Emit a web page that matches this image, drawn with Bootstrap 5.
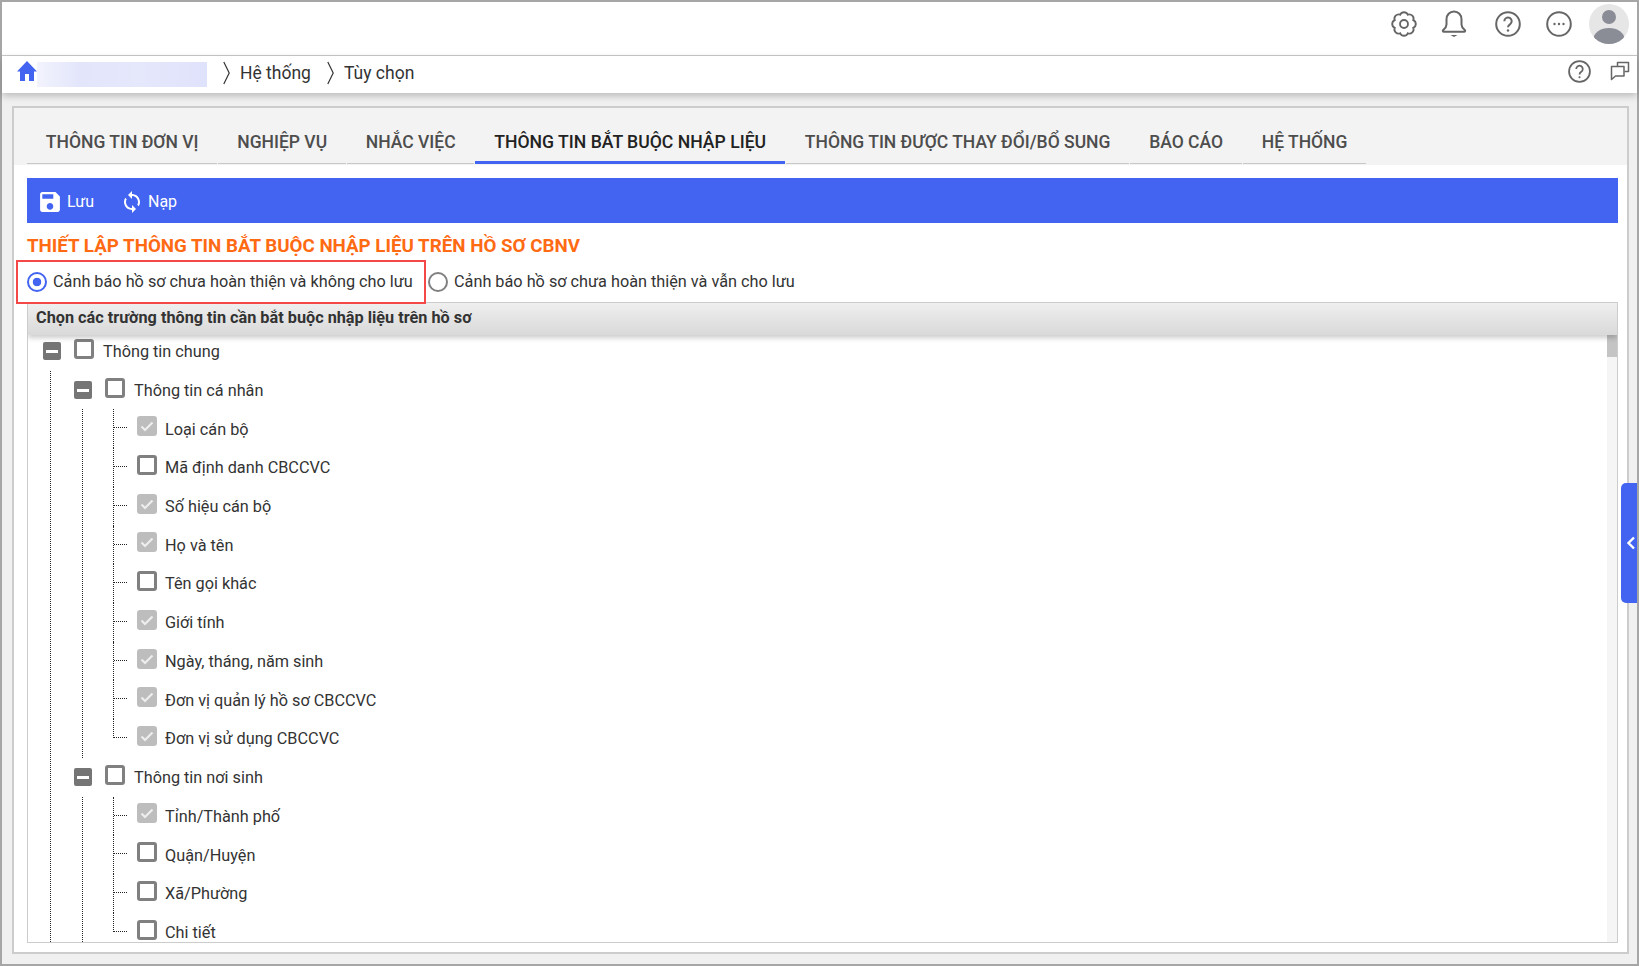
<!DOCTYPE html>
<html lang="vi">
<head>
<meta charset="utf-8">
<title>Tùy chọn</title>
<link href="https://cdn.jsdelivr.net/npm/bootstrap@5.3.0/dist/css/bootstrap.min.css" rel="stylesheet">
<style>
html,body{margin:0;height:966px;overflow:hidden}
body{font-family:Roboto,"Liberation Sans",sans-serif;color:#333;background:#f0f0f0}
.app-frame{position:relative;height:966px;border:2px solid #a6a6a6;background:#f0f0f0}
.top-head{height:54px;background:#fff;border-bottom:1px solid #c9c9c9;padding:0 8px 9px 0}
.top-head svg{display:block}
.head-ico{color:#666}
.gear-ico{margin-right:22px}
.bell-ico{margin-right:27px}
.help-ico{margin-right:25px}
.dots-ico{margin-right:17px}
.crumb-bar{height:37px;background:#fff;box-shadow:0 3px 7px rgba(0,0,0,.22);position:relative;padding:0 0 2px 15px;font-size:17.5px;line-height:1;color:#333}
.crumb-blur{width:170px;height:25px;margin-top:6px;background:linear-gradient(90deg,#f2f3fd,#e3e6fb 25%,#e5e8fb 60%,#dfe2fb)}
.crumb-chev{margin:-2px 10px 0 16px}
.crumb-tools{margin:-5px 7px 0 auto}
.crumb-help{margin-right:19px}
.home-ico{margin-top:-6px}
.main-card{margin:13px 8px 10px 10px;height:848px;border:2px solid #ccc;background:#fff}
.tab-strip{height:57px;background:#f3f3f3;padding:0 0 1px 13px;margin:0;list-style:none;gap:1px;flex-wrap:nowrap}
.tab-link{display:block;height:56px;padding:22px 18.85px 0;border-bottom:1px solid #c8c8c8;font-size:17.5px;line-height:24px;font-weight:500;color:#4d4d4d;text-decoration:none;white-space:nowrap}
.tab-link.on{color:#222;font-size:17.63px;border-bottom:3px solid #4364f0}
.tool-bar{height:45px;margin:13px 9px 0 13px;background:#4364f0;color:#fff;padding-left:12px}
.tool-btn{color:#fff;padding:3px 0 0;border:0;font-size:16px;display:flex;align-items:center;gap:6px}
.tool-btn:hover{color:#fff}
.save-btn{margin-right:26px}
.sync-btn{gap:4px}
.set-title{height:37px;margin:0 0 0 13px;line-height:47px;font-size:18.75px;font-weight:700;color:#ff6a13;white-space:nowrap}
.radio-row{height:44px;margin-left:2px;font-size:16.25px;position:relative;z-index:2}
.radio-mark{border:2px solid #f44848;height:44px;width:410px;padding-left:9px;margin-right:2px;white-space:nowrap}
.form-check-input.pick{width:20px;height:20px;margin:0 6px 0 0;flex:none;border:2px solid #808080;box-shadow:none;background:#fff}
.form-check-input.pick:checked{border-color:#4364f0;background:radial-gradient(circle,#4364f0 0 4px,#fff 4.6px)}
.tree-panel{margin:-2px 9px 0 13px;height:641px;border:1px solid #ccc;overflow:hidden;position:relative}
.panel-head{height:32px;background:linear-gradient(#efefef,#d9d9d9);font-size:16.25px;font-weight:700;line-height:30px;padding-left:8px;color:#333;position:relative;z-index:1;box-shadow:0 3px 5px rgba(0,0,0,.2)}
.tree-zone{height:607px}
.tree-flow{margin-top:-3px;overflow:hidden;height:610px}
.side-scroll{width:10px;background:#f5f5f5}
.side-thumb{height:22px;background:#c4c4c4}
.node{height:38.73px;padding-top:2px;font-size:16.25px;white-space:nowrap;color:#333}
.node-root{padding-left:15px}
.node-mid{padding-left:23px}
.fold{width:18px;height:18px;background:#757575;border-radius:2px;margin:0 13px 2px 0;display:flex;align-items:center;justify-content:center;flex:none}
.fold::after{content:"";width:12px;height:3px;background:#fff}
.form-check-input.tick-box{width:20px;height:20px;margin:0 9px 7px 0;flex:none;border:3px solid #808080;border-radius:3px;box-shadow:none;background:#fff}
.form-check-input.tick-box.locked{border-color:#bdbdbd;background-color:#bdbdbd;background-image:url("data:image/svg+xml,%3csvg xmlns='http://www.w3.org/2000/svg' viewBox='0 0 14 14'%3e%3cpath fill='none' stroke='%23eee' stroke-width='2.2' d='M1.5 7.500l3.500 3.500 7.500-7.500'/%3e%3c/svg%3e");background-size:14px;background-position:center;background-repeat:no-repeat}
.rail-one{margin-left:22px;border-left:1px dotted #222}
.rail-two{margin-left:31px;border-left:1px dotted #222}
.leaf-list{margin-left:30px}
.leaf-list .form-check-input.tick-box{margin-right:8px}
.elbow{width:14px;margin:-2px 10px 0 0;align-self:stretch;border-left:1px dotted #222;flex:none}
.elbow::after{content:"";display:block;height:19px;border-bottom:1px dotted #222}
.elbow.end{align-self:flex-start;height:19px}
.side-toggle{position:absolute;right:0;top:481px;width:16px;height:120px;padding-left:3px;background:#4364f0;border-radius:5px 0 0 5px}
</style>
</head>
<body>
<div class="app-frame d-flex flex-column">
  <header class="top-head d-flex align-items-center justify-content-end flex-shrink-0">
    <svg class="head-ico gear-ico" width="28" height="28" viewBox="0 0 24 24" fill="none" stroke="currentColor" stroke-width="1.6"><path d="M19.95 8.71A3.6 3.6 0 0 1 19.95 15.29A3.6 3.6 0 0 1 15.29 19.95A3.6 3.6 0 0 1 8.71 19.95A3.6 3.6 0 0 1 4.05 15.29A3.6 3.6 0 0 1 4.05 8.71A3.6 3.6 0 0 1 8.71 4.05A3.6 3.6 0 0 1 15.29 4.05A3.6 3.6 0 0 1 19.95 8.71Z"/><circle cx="12" cy="12" r="3.4"/></svg>
    <svg class="head-ico bell-ico" width="28" height="30" viewBox="0 0 28 30" fill="none" stroke="currentColor" stroke-width="2"><path d="M14 2.500c-4.400 0-7.500 3.500-7.500 7.800v5.200c0 2.800-1.500 4-3.300 5.500-.8.700-.3 1.800.7 1.800h20.200c1 0 1.500-1.100.7-1.800-1.800-1.500-3.300-2.700-3.300-5.500v-5.200c0-4.300-3.100-7.800-7.500-7.800z" stroke-linejoin="round"/><path d="M10.500 26h7l-3.500 2z" fill="currentColor" stroke="none"/></svg>
    <svg class="head-ico help-ico" width="26" height="26" viewBox="0 0 26 26" fill="none" stroke="currentColor" stroke-width="2"><circle cx="13" cy="13" r="11.800"/><path d="M9.300 10.200a3.700 3.700 0 1 1 5.700 3.100c-1.300.8-2 1.500-2 3"/><circle cx="13" cy="19.500" r="1.200" fill="currentColor" stroke="none"/></svg>
    <svg class="head-ico dots-ico" width="26" height="26" viewBox="0 0 26 26" fill="none" stroke="currentColor" stroke-width="2"><circle cx="13" cy="13" r="11.800"/><g fill="currentColor" stroke="none"><circle cx="8.500" cy="13" r="1.200"/><circle cx="13" cy="13" r="1.200"/><circle cx="17.500" cy="13" r="1.200"/></g></svg>
    <svg width="40" height="40" viewBox="0 0 40 40"><defs><clipPath id="avatarClip"><circle cx="20" cy="20" r="20"/></clipPath></defs><circle cx="20" cy="20" r="20" fill="#e6e6e6"/><g clip-path="url(#avatarClip)" fill="#8a8c96"><circle cx="20" cy="13" r="7"/><ellipse cx="20" cy="35" rx="15.500" ry="11"/></g></svg>
  </header>
  <nav class="crumb-bar d-flex align-items-center flex-shrink-0">
    <svg class="home-ico" width="20" height="20" viewBox="2 3 20 17" fill="#4364f0" preserveAspectRatio="none"><path d="M10 20v-6h4v6h5v-8h3L12 3 2 12h3v8z"/></svg>
    <div class="crumb-blur align-self-start"></div>
    <svg class="crumb-chev" width="7" height="24" viewBox="0 0 7 24" fill="none" stroke="#333" stroke-width="1.200"><path d="M.8 1l5.400 11-5.400 11"/></svg>
    <span>Hệ thống</span>
    <svg class="crumb-chev" width="7" height="24" viewBox="0 0 7 24" fill="none" stroke="#333" stroke-width="1.200"><path d="M.8 1l5.400 11-5.400 11"/></svg>
    <span>Tùy chọn</span>
    <div class="crumb-tools d-flex align-items-center head-ico">
      <svg class="crumb-help" width="23" height="23" viewBox="0 0 26 26" fill="none" stroke="currentColor" stroke-width="2"><circle cx="13" cy="13" r="11.800"/><path d="M9.300 10.200a3.700 3.700 0 1 1 5.700 3.100c-1.300.8-2 1.500-2 3"/><circle cx="13" cy="19.500" r="1.200" fill="currentColor" stroke="none"/></svg>
      <svg width="20" height="20" viewBox="0 0 20 20" fill="none" stroke="currentColor" stroke-width="1.500" stroke-linejoin="round"><path d="M7.500 5.500V1.500h11v9h-4"/><path d="M1.500 5.500h12.500v9.500H5.500L1.500 18.500z"/></svg>
    </div>
  </nav>
  <main class="main-card flex-shrink-0">
    <ul class="nav tab-strip">
      <li class="nav-item"><a class="tab-link" href="#">THÔNG TIN ĐƠN VỊ</a></li>
      <li class="nav-item"><a class="tab-link" href="#">NGHIỆP VỤ</a></li>
      <li class="nav-item"><a class="tab-link" href="#">NHẮC VIỆC</a></li>
      <li class="nav-item"><a class="tab-link on" href="#">THÔNG TIN BẮT BUỘC NHẬP LIỆU</a></li>
      <li class="nav-item"><a class="tab-link" href="#">THÔNG TIN ĐƯỢC THAY ĐỔI/BỔ SUNG</a></li>
      <li class="nav-item"><a class="tab-link" href="#">BÁO CÁO</a></li>
      <li class="nav-item"><a class="tab-link" href="#">HỆ THỐNG</a></li>
    </ul>
    <div class="tool-bar d-flex align-items-center">
      <button type="button" class="btn tool-btn save-btn"><svg width="22" height="22" viewBox="2 2 20 20" fill="#fff"><path d="M17 3H5c-1.110 0-2 .9-2 2v14c0 1.100.89 2 2 2h14c1.100 0 2-.9 2-2V7l-4-4zm-5 16c-1.660 0-3-1.340-3-3s1.340-3 3-3 3 1.340 3 3-1.340 3-3 3zm3-10H5V5h10v4z"/></svg>Lưu</button>
      <button type="button" class="btn tool-btn sync-btn"><svg width="24" height="24" viewBox="0 0 24 24" fill="#fff"><path d="M12 4V1L8 5l4 4V6c3.310 0 6 2.690 6 6 0 1.010-.25 1.970-.7 2.800l1.460 1.460C19.540 15.030 20 13.570 20 12c0-4.420-3.580-8-8-8zm0 14c-3.310 0-6-2.690-6-6 0-1.010.25-1.970.7-2.800L5.240 7.740C4.460 8.970 4 10.430 4 12c0 4.420 3.580 8 8 8v3l4-4-4-4v3z"/></svg>Nạp</button>
    </div>
    <h2 class="set-title">THIẾT LẬP THÔNG TIN BẮT BUỘC NHẬP LIỆU TRÊN HỒ SƠ CBNV</h2>
    <div class="radio-row d-flex align-items-center">
      <label class="radio-mark d-flex align-items-center"><input class="form-check-input pick" type="radio" name="warnMode" checked>Cảnh báo hồ sơ chưa hoàn thiện và không cho lưu</label>
      <label class="d-flex align-items-center"><input class="form-check-input pick" type="radio" name="warnMode">Cảnh báo hồ sơ chưa hoàn thiện và vẫn cho lưu</label>
    </div>
    <section class="tree-panel">
      <div class="panel-head">Chọn các trường thông tin cần bắt buộc nhập liệu trên hồ sơ</div>
      <div class="tree-zone d-flex">
        <div class="tree-flow flex-grow-1">
          <div class="node node-root d-flex align-items-center"><span class="fold"></span><input class="form-check-input tick-box" type="checkbox">Thông tin chung</div>
          <div class="rail-one">
            <div class="node node-mid d-flex align-items-center"><span class="fold"></span><input class="form-check-input tick-box" type="checkbox">Thông tin cá nhân</div>
            <div class="rail-two"><div class="leaf-list">
              <div class="node d-flex align-items-center"><span class="elbow"></span><input class="form-check-input tick-box locked" type="checkbox">Loại cán bộ</div>
              <div class="node d-flex align-items-center"><span class="elbow"></span><input class="form-check-input tick-box" type="checkbox">Mã định danh CBCCVC</div>
              <div class="node d-flex align-items-center"><span class="elbow"></span><input class="form-check-input tick-box locked" type="checkbox">Số hiệu cán bộ</div>
              <div class="node d-flex align-items-center"><span class="elbow"></span><input class="form-check-input tick-box locked" type="checkbox">Họ và tên</div>
              <div class="node d-flex align-items-center"><span class="elbow"></span><input class="form-check-input tick-box" type="checkbox">Tên gọi khác</div>
              <div class="node d-flex align-items-center"><span class="elbow"></span><input class="form-check-input tick-box locked" type="checkbox">Giới tính</div>
              <div class="node d-flex align-items-center"><span class="elbow"></span><input class="form-check-input tick-box locked" type="checkbox">Ngày, tháng, năm sinh</div>
              <div class="node d-flex align-items-center"><span class="elbow"></span><input class="form-check-input tick-box locked" type="checkbox">Đơn vị quản lý hồ sơ CBCCVC</div>
              <div class="node d-flex align-items-center"><span class="elbow end"></span><input class="form-check-input tick-box locked" type="checkbox">Đơn vị sử dụng CBCCVC</div>
            </div></div>
            <div class="node node-mid d-flex align-items-center"><span class="fold"></span><input class="form-check-input tick-box" type="checkbox">Thông tin nơi sinh</div>
            <div class="rail-two"><div class="leaf-list">
              <div class="node d-flex align-items-center"><span class="elbow"></span><input class="form-check-input tick-box locked" type="checkbox">Tỉnh/Thành phố</div>
              <div class="node d-flex align-items-center"><span class="elbow"></span><input class="form-check-input tick-box" type="checkbox">Quận/Huyện</div>
              <div class="node d-flex align-items-center"><span class="elbow"></span><input class="form-check-input tick-box" type="checkbox">Xã/Phường</div>
              <div class="node d-flex align-items-center"><span class="elbow end"></span><input class="form-check-input tick-box" type="checkbox">Chi tiết</div>
            </div></div>
          </div>
        </div>
        <div class="side-scroll flex-shrink-0"><div class="side-thumb"></div></div>
      </div>
    </section>
  </main>
  <div class="side-toggle d-flex align-items-center justify-content-center"><svg width="10" height="14" viewBox="0 0 10 14" fill="none" stroke="#fff" stroke-width="2.400"><path d="M8 1.500L2.500 7 8 12.500"/></svg></div>
</div>
<script src="https://cdn.jsdelivr.net/npm/bootstrap@5.3.0/dist/js/bootstrap.bundle.min.js"></script>
</body>
</html>
